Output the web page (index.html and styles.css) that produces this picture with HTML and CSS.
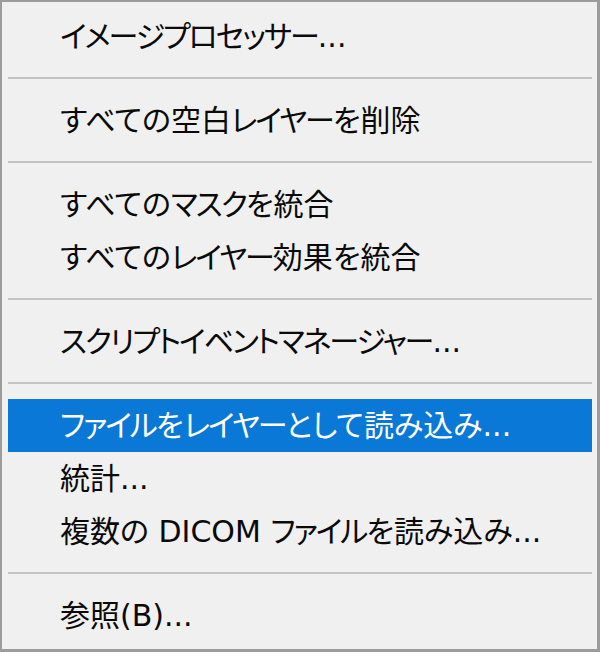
FILE: index.html
```html
<!DOCTYPE html>
<html lang="ja">
<head>
<meta charset="utf-8">
<link rel="stylesheet" href="styles.css">
</head>
<body>
<div class="menu">
  <div class="item"><span class="k">イメージプロセッサー</span>...</div>
  <div class="sep"></div>
  <div class="item">すべての空白<span class="k">レイヤー</span>を削除</div>
  <div class="sep"></div>
  <div class="item">すべての<span class="k">マスク</span>を統合</div>
  <div class="item">すべての<span class="k">レイヤー</span>効果を統合</div>
  <div class="sep"></div>
  <div class="item"><span class="k">スクリプトイベントマネージャー</span>...</div>
  <div class="sep"></div>
  <div class="item active"><span class="k">ファイル</span>を<span class="k">レイヤー</span>として読み込み...</div>
  <div class="item">統計...</div>
  <div class="item">複数の DICOM <span class="k">ファイル</span>を読み込み...</div>
  <div class="sep"></div>
  <div class="item">参照(B)...</div>
</div>
</body>
</html>
```
FILE: styles.css
```css
html, body {
  margin: 0;
  padding: 0;
  background: #f0f0f0;
}
.menu {
  box-sizing: border-box;
  width: 600px;
  height: 652px;
  border: 3px solid #9c9c9c;
  border-left-width: 2px;
  border-top-width: 2px;
  background: #f0f0f0;
  padding: 8px 5px 0 6px;
  font-family: "DejaVu Sans", "Noto Sans CJK JP", sans-serif;
  font-size: 30px;
  font-feature-settings: "palt";
  color: #0a0a0a;
  display: flex;
  flex-direction: column;
}
.item {
  height: 53px;
  line-height: 53px;
  padding-left: 52px;
  white-space: nowrap;
}
.k {
  letter-spacing: -2px;
}
.item.active {
  background: #0a78d7;
  color: #fff;
}
.sep {
  height: 2px;
  background: #c4c4c4;
  margin: 14px 0 15px;
}
```
